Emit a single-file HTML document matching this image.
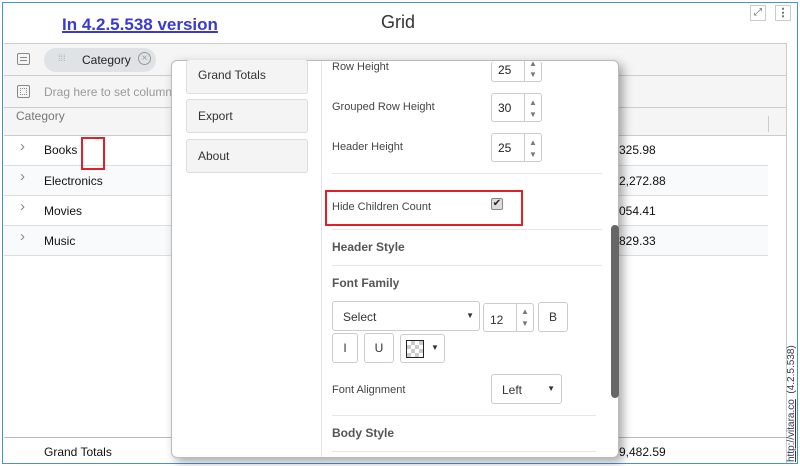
<!DOCTYPE html>
<html><head><meta charset="utf-8"><style>
*{box-sizing:border-box;margin:0;padding:0}
body{width:800px;height:466px;overflow:hidden;background:#fff;font-family:"Liberation Sans",Arial,sans-serif;position:relative;font-size:12px;color:#222}
.a{position:absolute}
.frame{left:2px;top:2px;width:796px;height:462px;border:1px solid #4a90d9}
.row{left:4px;width:764px;height:30px;border-bottom:1px solid #ddd}
.rt{font-size:12px;color:#111}
.btn{left:186px;width:122px;height:34px;background:#f4f4f4;border:1px solid #ddd;border-radius:3px;font-size:12px;color:#333;padding:9px 11px}
.lbl{left:332px;font-size:11px;color:#444}
.spin{left:491px;width:51px;height:29px;border:1px solid #ccc;border-radius:3px;background:#fff}
.spin span{position:absolute;left:6px;top:7px;font-size:12px;color:#222}
.spin i{position:absolute;left:32px;top:0;bottom:0;border-left:1px solid #ccc}
.spin b{position:absolute;left:37px;font-size:8px;color:#777;font-weight:normal}
.hr{left:332px;width:264px;border-top:1px solid #e5e5e5}
.h{left:332px;font-size:12px;font-weight:bold;color:#555}
.sb{border:1px solid #ccc;border-radius:3px;background:#fff;font-size:12px;color:#333;text-align:center}
.chev{font-size:15px;color:#888;font-weight:normal}
</style></head><body>
<div class="a frame"></div>
<div class="a" style="left:62px;top:15px;font-size:17px;font-weight:bold;color:#3a3acf;text-decoration:underline;text-decoration-thickness:2px">In 4.2.5.538 version</div>
<div class="a" style="left:381px;top:12px;font-size:18px;color:#333">Grid</div>
<div class="a" style="left:750px;top:5px;width:16px;height:16px;border:1px solid #ccc;font-size:10px;text-align:center;color:#555;line-height:14px">⤢</div>
<div class="a" style="left:775px;top:5px;width:16px;height:16px;border:1px solid #ccc;font-size:11px;text-align:center;color:#555;line-height:14px;font-weight:bold">⋮</div>
<div class="a" style="left:4px;top:43px;width:783px;height:93px;background:#f4f5f4;border-top:1px solid #ccc;border-right:1px solid #ccc"></div>
<div class="a" style="left:4px;top:75px;width:783px;border-top:1px solid #ccc"></div>
<div class="a" style="left:4px;top:107px;width:783px;border-top:1px solid #ccc"></div>
<div class="a" style="left:4px;top:135px;width:783px;border-top:1px solid #ccc"></div>
<div class="a" style="left:786px;top:43px;height:420px;border-left:1px solid #ccc"></div>
<div class="a" style="left:17px;top:53px;width:13px;height:12px;border:1px solid #888;border-radius:2px;padding:2px 2px"><div style="border-top:1px solid #888;margin-top:1px"></div><div style="border-top:1px solid #888;margin-top:2px"></div></div>
<div class="a" style="left:44px;top:48px;width:112px;height:24px;background:#dfe3e6;border-radius:12px"></div>
<div class="a" style="left:58px;top:53px;font-size:9px;color:#aaa">⁞⁞⁞</div>
<div class="a" style="left:82px;top:53px;font-size:12px;color:#222">Category</div>
<div class="a" style="left:138px;top:52px;width:13px;height:13px;border:1px solid #999;border-radius:50%;font-size:10px;text-align:center;line-height:11px;color:#999">×</div>
<div class="a" style="left:17px;top:85px;width:13px;height:13px;border:1px solid #888;border-radius:2px"><div style="margin:2px;height:7px;border:1px dotted #888"></div></div>
<div class="a" style="left:44px;top:85px;font-size:12px;color:#999">Drag here to set columns</div>
<div class="a" style="left:16px;top:109px;font-size:12px;color:#777">Category</div>
<div class="a" style="left:768px;top:116px;height:16px;border-left:1px solid #ccc"></div>
<div class="a row" style="top:136px"></div>
<div class="a row" style="top:166px;background:#f8fafc"></div>
<div class="a row" style="top:196px"></div>
<div class="a row" style="top:226px;background:#f8fafc"></div>
<div class="a chev" style="left:20px;top:138px">›</div><div class="a rt" style="left:44px;top:143px">Books</div>
<div class="a chev" style="left:20px;top:168px">›</div><div class="a rt" style="left:44px;top:174px">Electronics</div>
<div class="a chev" style="left:20px;top:198px">›</div><div class="a rt" style="left:44px;top:204px">Movies</div>
<div class="a chev" style="left:20px;top:228px">›</div><div class="a rt" style="left:44px;top:234px">Music</div>
<div class="a rt" style="left:619px;top:143px">325.98</div>
<div class="a rt" style="left:619px;top:174px">2,272.88</div>
<div class="a rt" style="left:619px;top:204px">054.41</div>
<div class="a rt" style="left:619px;top:234px">829.33</div>
<div class="a" style="left:4px;top:437px;width:783px;border-top:1px solid #bbb"></div>
<div class="a rt" style="left:44px;top:445px">Grand Totals</div>
<div class="a rt" style="left:619px;top:445px">9,482.59</div>
<div class="a" style="left:81px;top:137px;width:24px;height:33px;border:2px solid #e0202a"></div>
<div class="a" style="left:786px;top:462px;transform:rotate(-90deg);transform-origin:0 0;font-size:10px;color:#335;white-space:nowrap;width:120px"><span style="text-decoration:underline">http://vitara.co</span>&nbsp;&nbsp;(4.2.5.538)</div>
<div class="a" style="left:171px;top:60px;width:448px;height:398px;background:#fff;border:1px solid #bbb;border-radius:6px;box-shadow:4px 4px 10px rgba(0,0,0,.35);overflow:hidden"></div>
<div class="a" style="left:321px;top:61px;height:396px;border-left:1px solid #e5e5e5"></div>
<div class="a btn" style="top:60px;height:34px;border-top:none;padding-top:8px">Grand Totals</div>
<div class="a btn" style="top:99px">Export</div>
<div class="a btn" style="top:139px">About</div>
<div class="a lbl" style="top:61px">Row Height</div>
<div class="a spin" style="top:61px;height:21px;border-top:none"><span style="top:2px">25</span><i></i><b style="top:-2px">▲</b><b style="top:9px">▼</b></div>
<div class="a lbl" style="top:101px">Grouped Row Height</div>
<div class="a spin" style="top:93px"><span>30</span><i></i><b style="top:4px">▲</b><b style="top:16px">▼</b></div>
<div class="a lbl" style="top:141px">Header Height</div>
<div class="a spin" style="top:133px"><span>25</span><i></i><b style="top:4px">▲</b><b style="top:16px">▼</b></div>
<div class="a hr" style="top:173px;width:270px"></div>
<div class="a lbl" style="top:201px">Hide Children Count</div>
<div class="a" style="left:491px;top:198px;width:12px;height:12px;border:1px solid #888;border-radius:2px;background:#ddd;font-size:10px;line-height:10px;text-align:center;color:#222">✔</div>
<div class="a" style="left:325px;top:190px;width:198px;height:36px;border:2px solid #e0202a"></div>
<div class="a hr" style="top:229px;width:270px"></div>
<div class="a h" style="top:240px">Header Style</div>
<div class="a hr" style="top:265px;width:270px"></div>
<div class="a h" style="top:276px">Font Family</div>
<div class="a sb" style="left:332px;top:301px;width:148px;height:30px;text-align:left;padding:8px 10px">Select<span style="position:absolute;right:5px;top:9px;font-size:8px">▼</span></div>
<div class="a sb" style="left:483px;top:303px;width:51px;height:29px;text-align:left;padding:9px 6px">12<span style="position:absolute;left:32px;top:0;bottom:0;border-left:1px solid #ccc"></span><span style="position:absolute;left:37px;top:3px;font-size:8px;color:#777">▲</span><span style="position:absolute;left:37px;top:15px;font-size:8px;color:#777">▼</span></div>
<div class="a sb" style="left:538px;top:302px;width:30px;height:30px;line-height:28px">B</div>
<div class="a sb" style="left:332px;top:333px;width:26px;height:30px;line-height:28px">I</div>
<div class="a sb" style="left:364px;top:333px;width:30px;height:30px;line-height:28px">U</div>
<div class="a sb" style="left:400px;top:334px;width:45px;height:29px"></div>
<div class="a" style="left:406px;top:340px;width:18px;height:18px;border:1px solid #222;background:conic-gradient(#ccc 25%,#fff 0 50%,#ccc 0 75%,#fff 0);background-size:8px 8px"></div>
<div class="a" style="left:431px;top:343px;font-size:8px;color:#333">▼</div>
<div class="a lbl" style="top:384px">Font Alignment</div>
<div class="a sb" style="left:491px;top:374px;width:71px;height:30px;text-align:left;padding:8px 10px">Left<span style="position:absolute;right:6px;top:9px;font-size:8px">▼</span></div>
<div class="a hr" style="top:415px;width:264px"></div>
<div class="a h" style="top:426px">Body Style</div>
<div class="a hr" style="top:451px;width:264px"></div>
<div class="a" style="left:611px;top:225px;width:8px;height:173px;background:#666;border-radius:4px"></div>
</body></html>
